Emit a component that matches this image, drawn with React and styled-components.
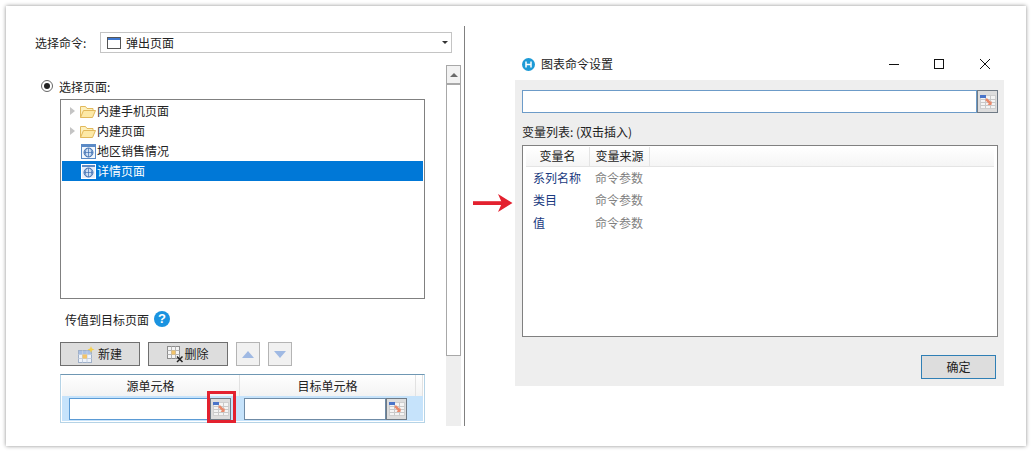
import React from 'react'
import styled, { createGlobalStyle } from 'styled-components'

const GlobalStyle = createGlobalStyle`
  html, body {
    margin: 0;
    background: #fff;
  }
  body {
    font-family: "Noto Sans CJK SC", "Liberation Sans", sans-serif;
    font-size: 12px;
    color: #222;
  }
`

const Page = styled.div`
  width: 1032px;
  height: 452px;
  padding: 6px;
  box-sizing: border-box;
  overflow: hidden;
`

const Card = styled.div`
  display: flex;
  align-items: flex-start;
  height: 440px;
  padding-top: 20px;
  box-sizing: border-box;
  background: #fff;
  box-shadow: 0 0 4px rgba(0, 0, 0, 0.45);
`

/* left settings pane */
const LeftPane = styled.div`
  width: 459px;
  height: 400px;
  box-sizing: border-box;
  padding: 6px 3px 0 29px;
  border-right: 1px solid #808080;
  overflow: hidden;
`

const CommandRow = styled.div`
  display: flex;
  align-items: center;
  margin-right: 9px;
`

const CommandLabel = styled.span`
  width: 65px;
  line-height: 21px;
`

const Select = styled.div`
  flex: 1;
  height: 21px;
  display: flex;
  align-items: center;
  gap: 5px;
  padding: 0 3px 0 6px;
  border: 1px solid #c4c4c4;
  box-sizing: border-box;
`

const SelectText = styled.span`
  flex: 1;
  line-height: 19px;
`

const Caret = styled.span`
  width: 0;
  height: 0;
  border-left: 3px solid transparent;
  border-right: 3px solid transparent;
  border-top: 3px solid #333;
`

const PaneBody = styled.div`
  display: flex;
  margin-top: 12px;
`

const MainColumn = styled.div`
  flex: 1;
  padding-top: 13px;
`

const RadioRow = styled.div`
  display: flex;
  align-items: center;
  gap: 6px;
  height: 16px;
  margin-left: 6px;
`

const Radio = styled.span`
  width: 12px;
  height: 12px;
  border-radius: 50%;
  border: 1px solid #666;
  box-sizing: border-box;
  display: flex;
  align-items: center;
  justify-content: center;
  &::after {
    content: '';
    width: 6px;
    height: 6px;
    border-radius: 50%;
    background: #222;
  }
`

const Tree = styled.div`
  width: 365px;
  height: 200px;
  margin: 5px 0 0 25px;
  padding: 1px;
  border: 1px solid #808080;
  box-sizing: border-box;
`

const TreeRow = styled.div`
  height: 20px;
  display: flex;
  align-items: center;
  padding-left: ${p => (p.$leaf ? '19px' : '8px')};
  background: ${p => (p.$selected ? '#0078d7' : 'transparent')};
  color: ${p => (p.$selected ? '#fff' : '#222')};
  line-height: 20px;
`

const Expander = styled.span`
  width: 0;
  height: 0;
  margin-right: 5px;
  border-top: 4px solid transparent;
  border-bottom: 4px solid transparent;
  border-left: 5px solid #c4c4c4;
`

const TransferRow = styled.div`
  display: flex;
  align-items: center;
  gap: 5px;
  height: 18px;
  margin: 11px 0 0 30px;
`

const HelpIcon = styled.span`
  width: 16px;
  height: 16px;
  border-radius: 50%;
  background: #1a93e0;
  color: #fff;
  font: bold 13px/16px "Liberation Sans", sans-serif;
  text-align: center;
`

const ButtonRow = styled.div`
  display: flex;
  gap: 8px;
  margin: 14px 0 0 25px;
`

const ActionButton = styled.div`
  width: 80px;
  height: 24px;
  display: flex;
  align-items: center;
  justify-content: center;
  gap: ${p => p.$gap || 0}px;
  background: #dddddd;
  border: 1px solid #6f6f6f;
  box-sizing: border-box;
  line-height: 22px;
`

const MoveButton = styled.div`
  width: 24px;
  height: 24px;
  display: flex;
  align-items: center;
  justify-content: center;
  background: #f1f1f1;
  border: 1px solid #b4b4b4;
  box-sizing: border-box;
  &::after {
    content: '';
    width: 0;
    height: 0;
    border-left: 6px solid transparent;
    border-right: 6px solid transparent;
    ${p => (p.$down ? 'border-top: 7px solid #9fb9e3;' : 'border-bottom: 7px solid #9fb9e3;')}
  }
`

const Grid = styled.div`
  position: relative;
  width: 365px;
  height: 49px;
  margin: 8px 0 0 25px;
  padding: 0 1px 1px;
  border: 1px solid #b5d3e6;
  border-top-color: #6f97b3;
  box-sizing: border-box;
`

const GridHead = styled.div`
  display: grid;
  grid-template-columns: 178px 176px 1fr;
  height: 21px;
  background: linear-gradient(#ffffff, #f3f3f3);
`

const GridHeadCell = styled.div`
  text-align: center;
  line-height: 21px;
  border-right: 1px solid #e2e2e2;
`

const GridRow = styled.div`
  display: flex;
  align-items: center;
  height: 25px;
  padding-left: 7px;
  gap: 13px;
  background: #c6e3fb;
`

const CellEditor = styled.div`
  display: flex;
  height: 22px;
  width: ${p => (p.$wide ? '163px' : '162px')};
`

const CellInput = styled.div`
  flex: 1;
  background: #fff;
  border: 1px solid ${p => (p.$active ? '#5b9bd5' : '#6f8ba6')};
  box-sizing: border-box;
`

const PickerButton = styled.div`
  width: 21px;
  display: flex;
  align-items: center;
  justify-content: center;
  background: #dddddd;
  border: 1px solid #6f7a85;
  box-sizing: border-box;
`

const Highlight = styled.div`
  position: absolute;
  left: 146px;
  top: 16px;
  width: 29px;
  height: 32px;
  border: 3px solid #e3212f;
  box-sizing: border-box;
`

const ScrollBar = styled.div`
  width: 15px;
  height: 361px;
  display: flex;
  flex-direction: column;
  background: #eeeeee;
`

const ScrollThumb = styled.div`
  height: 291px;
  display: flex;
  flex-direction: column;
  background: #fff;
  border: 1px solid #a8a8a8;
  box-sizing: border-box;
`

const ScrollUp = styled.div`
  height: 17px;
  display: flex;
  align-items: center;
  justify-content: center;
  border-bottom: 2px solid #a8a8a8;
  background: #f2f2f2;
  &::after {
    content: '';
    width: 0;
    height: 0;
    border-left: 4px solid transparent;
    border-right: 4px solid transparent;
    border-bottom: 4px solid #6a6a6a;
  }
`

/* arrow between the two shots */
const ArrowSlot = styled.div`
  width: 42px;
  margin: 168px 0 0 8px;
  line-height: 0;
`

/* right dialog */
const Dialog = styled.div`
  width: 489px;
  margin-top: 24px;
`

const TitleBar = styled.div`
  height: 30px;
  display: flex;
  align-items: center;
  padding: 0 14px 2px 7px;
  box-sizing: border-box;
`

const DialogTitle = styled.span`
  flex: 1;
  margin-left: 6px;
  line-height: 16px;
`

const WindowControls = styled.div`
  display: flex;
  gap: 35px;
  & > :last-child {
    margin-left: 1px;
  }
`

const DialogBody = styled.div`
  height: 306px;
  padding: 10px 6px 0 7px;
  background: #eeeeee;
  box-sizing: border-box;
`

const ExpressionRow = styled.div`
  display: flex;
  height: 23px;
`

const ExpressionInput = styled.div`
  flex: 1;
  background: #fff;
  border: 1px solid #6c9bc8;
  box-sizing: border-box;
`

const FieldLabel = styled.div`
  margin-top: 11px;
  line-height: 16px;
`

const VariableList = styled.div`
  height: 192px;
  margin-top: 5px;
  padding: 1px 3px;
  background: #fff;
  border: 1px solid #808080;
  box-sizing: border-box;
`

const ListHead = styled.div`
  display: grid;
  grid-template-columns: 64px 60px 1fr;
  height: 19px;
  background: linear-gradient(#ffffff, #f5f5f5);
  border-bottom: 1px solid #e4e4e4;
`

const ListHeadCell = styled.div`
  text-align: center;
  line-height: 18px;
  ${p => p.$divider && 'border-right: 1px solid #e4e4e4;'}
`

const ListRow = styled.div`
  display: grid;
  grid-template-columns: 62px 1fr;
  height: ${p => p.$height}px;
  padding-left: 7px;
  line-height: 22px;
`

const VarName = styled.span`
  color: #1a3a80;
`

const VarSource = styled.span`
  color: #808080;
`

const DialogFooter = styled.div`
  display: flex;
  justify-content: flex-end;
  margin: 18px 2px 0 0;
`

const OkButton = styled.div`
  width: 75px;
  height: 24px;
  text-align: center;
  line-height: 22px;
  background: #dddddd;
  border: 1px solid #2f7fb5;
  box-sizing: border-box;
`

const WindowIcon = () => (
  <svg width="14" height="12" viewBox="0 0 14 12">
    <rect x="0.5" y="0.5" width="13" height="11" fill="#fff" stroke="#555" />
    <rect x="1" y="1" width="12" height="2" fill="#3f78d0" />
  </svg>
)

const FolderIcon = () => (
  <svg width="17" height="13" viewBox="0 0 17 13">
    <path d="M0.5 12.5V1.5h5l1.500 2h6v2" fill="#fdf0bd" stroke="#e2b95c" />
    <path d="M0.5 12.5l3-7h12l-3 7z" fill="#fde9a6" stroke="#e2b95c" />
  </svg>
)

const PageIcon = ({ selected }) => (
  <svg width="15" height="15" viewBox="0 0 15 15" style={{ marginRight: 1 }}>
    <rect x="0.5" y="0.5" width="14" height="14" fill={selected ? '#e6eefa' : '#f4f8fd'} stroke={selected ? '#fff' : '#5b8ac6'} />
    <rect x="1" y="1" width="13" height="2" fill="#5b8ac6" />
    <circle cx="7.5" cy="8.5" r="4.5" fill="#cfe0f5" stroke="#3f6fb0" />
    <path d="M3 8.5h9M7.5 4v9M5.5 4.5c-1.5 2.5-1.5 5.500 0 8M9.500 4.500c1.500 2.500 1.500 5.500 0 8" fill="none" stroke="#3f6fb0" strokeWidth="0.7" />
  </svg>
)

const NewIcon = () => (
  <svg width="17" height="17" viewBox="0 0 17 17">
    <rect x="0.500" y="4.500" width="13" height="12" fill="#eef3fb" stroke="#9fb0c8" />
    <rect x="1" y="5" width="12" height="3" fill="#a9c0e6" />
    <path d="M0.500 8.500h13M0.500 12.500h13M4.500 4.500v12M9 4.500v12" stroke="#c4cfdf" />
    <rect x="4.500" y="8.500" width="4.500" height="4" fill="#f3c46b" />
    <path d="M13 0l0.900 2.600L16.500 3.500l-2.600 0.900L13 7l-0.900-2.600L9.500 3.500l2.600-0.900z" fill="#f6d04a" />
  </svg>
)

const DeleteIcon = () => (
  <svg width="17" height="17" viewBox="0 0 17 17">
    <rect x="0.500" y="0.500" width="12" height="12" fill="#f5f5f5" stroke="#8d8d8d" />
    <path d="M0.500 4.500h12M0.500 8.500h12M4.500 0.500v12M8.500 0.500v12" stroke="#b5b5b5" />
    <rect x="4.500" y="4.500" width="4" height="4" fill="#f3c46b" />
    <path d="M10 10.500l5.500 5.500M15.500 10.500L10 16" stroke="#222" strokeWidth="1.500" />
  </svg>
)

const CellPickIcon = () => (
  <svg width="16" height="14" viewBox="0 0 16 14">
    <rect x="0.500" y="0.500" width="15" height="13" fill="#f4f4f4" stroke="#cfcfcf" />
    <path d="M0.500 4.500h15M0.500 7.500h15M0.500 10.500h15M5.500 0.500v13M10.500 0.500v13" stroke="#c9c9c9" />
    <rect x="0" y="0" width="6" height="3" fill="#4a74c9" />
    <path d="M6 4l5 5" stroke="#e98a6c" strokeWidth="2.500" />
    <path d="M11.500 6v4h-4z" fill="#e98a6c" />
  </svg>
)

const DialogLogo = () => (
  <svg width="13" height="13" viewBox="0 0 13 13">
    <circle cx="6.500" cy="6.500" r="6.500" fill="#1c9ad6" />
    <path d="M4 3.500v6M9 3.500v6M4 6.500h5" stroke="#fff" strokeWidth="1.500" fill="none" />
  </svg>
)

const MinimizeIcon = () => (
  <svg width="10" height="10" viewBox="0 0 10 10">
    <path d="M0 5.500h10" stroke="#111" />
  </svg>
)

const MaximizeIcon = () => (
  <svg width="10" height="10" viewBox="0 0 10 10">
    <rect x="0.500" y="0.500" width="9" height="9" fill="none" stroke="#111" />
  </svg>
)

const CloseIcon = () => (
  <svg width="10" height="10" viewBox="0 0 10 10">
    <path d="M0 0l10 10M10 0L0 10" stroke="#111" />
  </svg>
)

const RedArrow = () => (
  <svg width="40" height="18" viewBox="0 0 40 18">
    <path d="M0 7.200h30v3.800H0z" fill="#e3212f" />
    <path d="M25 0L39.500 9 25 18l4-9z" fill="#e3212f" />
  </svg>
)

const pages = [
  { name: '内建手机页面', folder: true },
  { name: '内建页面', folder: true },
  { name: '地区销售情况' },
  { name: '详情页面', selected: true },
]

const variables = [
  { name: '系列名称', height: 22 },
  { name: '类目', height: 23 },
  { name: '值', height: 22 },
]

const App = () => (
  <Page>
    <GlobalStyle />
    <Card>
      <LeftPane>
        <CommandRow>
          <CommandLabel>选择命令:</CommandLabel>
          <Select>
            <WindowIcon />
            <SelectText>弹出页面</SelectText>
            <Caret />
          </Select>
        </CommandRow>
        <PaneBody>
          <MainColumn>
            <RadioRow>
              <Radio />
              选择页面:
            </RadioRow>
            <Tree>
              {pages.map(page => (
                <TreeRow key={page.name} $leaf={!page.folder} $selected={page.selected}>
                  {page.folder && <Expander />}
                  {page.folder ? <FolderIcon /> : <PageIcon selected={page.selected} />}
                  {page.name}
                </TreeRow>
              ))}
            </Tree>
            <TransferRow>
              传值到目标页面
              <HelpIcon>?</HelpIcon>
            </TransferRow>
            <ButtonRow>
              <ActionButton $gap={3}><NewIcon />新建</ActionButton>
              <ActionButton><DeleteIcon />删除</ActionButton>
              <MoveButton />
              <MoveButton $down />
            </ButtonRow>
            <Grid>
              <GridHead>
                <GridHeadCell>源单元格</GridHeadCell>
                <GridHeadCell>目标单元格</GridHeadCell>
                <GridHeadCell />
              </GridHead>
              <GridRow>
                <CellEditor>
                  <CellInput $active />
                  <PickerButton><CellPickIcon /></PickerButton>
                </CellEditor>
                <CellEditor $wide>
                  <CellInput />
                  <PickerButton><CellPickIcon /></PickerButton>
                </CellEditor>
              </GridRow>
              <Highlight />
            </Grid>
          </MainColumn>
          <ScrollBar>
            <ScrollThumb>
              <ScrollUp />
            </ScrollThumb>
          </ScrollBar>
        </PaneBody>
      </LeftPane>
      <ArrowSlot><RedArrow /></ArrowSlot>
      <Dialog>
        <TitleBar>
          <DialogLogo />
          <DialogTitle>图表命令设置</DialogTitle>
          <WindowControls>
            <MinimizeIcon />
            <MaximizeIcon />
            <CloseIcon />
          </WindowControls>
        </TitleBar>
        <DialogBody>
          <ExpressionRow>
            <ExpressionInput />
            <PickerButton><CellPickIcon /></PickerButton>
          </ExpressionRow>
          <FieldLabel>变量列表: (双击插入)</FieldLabel>
          <VariableList>
            <ListHead>
              <ListHeadCell $divider>变量名</ListHeadCell>
              <ListHeadCell $divider>变量来源</ListHeadCell>
              <ListHeadCell />
            </ListHead>
            {variables.map(row => (
              <ListRow key={row.name} $height={row.height}>
                <VarName>{row.name}</VarName>
                <VarSource>命令参数</VarSource>
              </ListRow>
            ))}
          </VariableList>
          <DialogFooter>
            <OkButton>确定</OkButton>
          </DialogFooter>
        </DialogBody>
      </Dialog>
    </Card>
  </Page>
)

export default App
